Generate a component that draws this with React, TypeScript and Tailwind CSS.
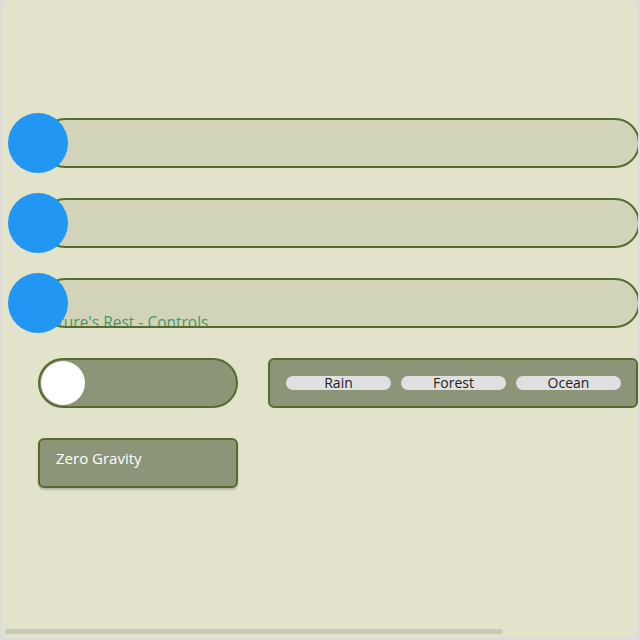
import React from "react";

function Slider() {
  return (
    <div className="relative h-[50px] w-[600px] shrink-0 rounded-full border-2 border-[#556b2f] bg-[#d2d4b9]">
      <div className="absolute left-[-34px] top-[-7px] z-30 h-[60px] w-[60px] rounded-full bg-[#2196f3]" />
    </div>
  );
}

export default function App() {
  const font = { fontFamily: '"Open Sans", "Noto Sans", sans-serif' };
  return (
    <div className="h-[640px] w-[640px] bg-[#dcdcdc] pl-[2px]" style={font}>
      <div className="relative h-[638px] w-[636px] overflow-hidden rounded-md bg-[#e3e3cc]">
        <div className="flex flex-col gap-[30px] pl-[38px] pt-[118px]">
          <Slider />
          <Slider />
          <Slider />
        </div>
        <div className="relative z-20 -mt-[16px] ml-[36px] h-[14px] overflow-hidden text-[15.5px] leading-[20px] text-[#4a9468]">
          <div>Nature's Rest - Controls</div>
        </div>
        <div className="mt-[32px] flex gap-[30px] pl-[36px]">
          <div className="flex h-[50px] w-[200px] shrink-0 items-center rounded-full border-2 border-[#556b2f] bg-[#8d9579] px-[1px]">
            <div className="h-[44px] w-[44px] rounded-full bg-white" />
          </div>
          <div className="flex h-[50px] w-[370px] shrink-0 items-center gap-[10px] rounded-md border-2 border-[#556b2f] bg-[#8d9579] pl-[16px]">
            {["Rain", "Forest", "Ocean"].map((t) => (
              <div
                key={t}
                className="flex h-[14px] w-[105px] items-center justify-center rounded-full bg-[#e0e0e0] text-[14px] leading-none text-[#222]"
              >
                {t}
              </div>
            ))}
          </div>
        </div>
        <div className="ml-[36px] mt-[30px] h-[50px] w-[200px] rounded-md border-2 border-[#556b2f] bg-[#8d9579] pl-[16px] pt-[8px] text-[15px] leading-[20px] text-white shadow-[0_2px_2px_rgba(0,0,0,0.2)]">
          Zero Gravity
        </div>
        <div className="absolute bottom-[4px] left-[3px] h-[5px] w-[498px] rounded-sm bg-[#c8c9b8]" />
      </div>
    </div>
  );
}
